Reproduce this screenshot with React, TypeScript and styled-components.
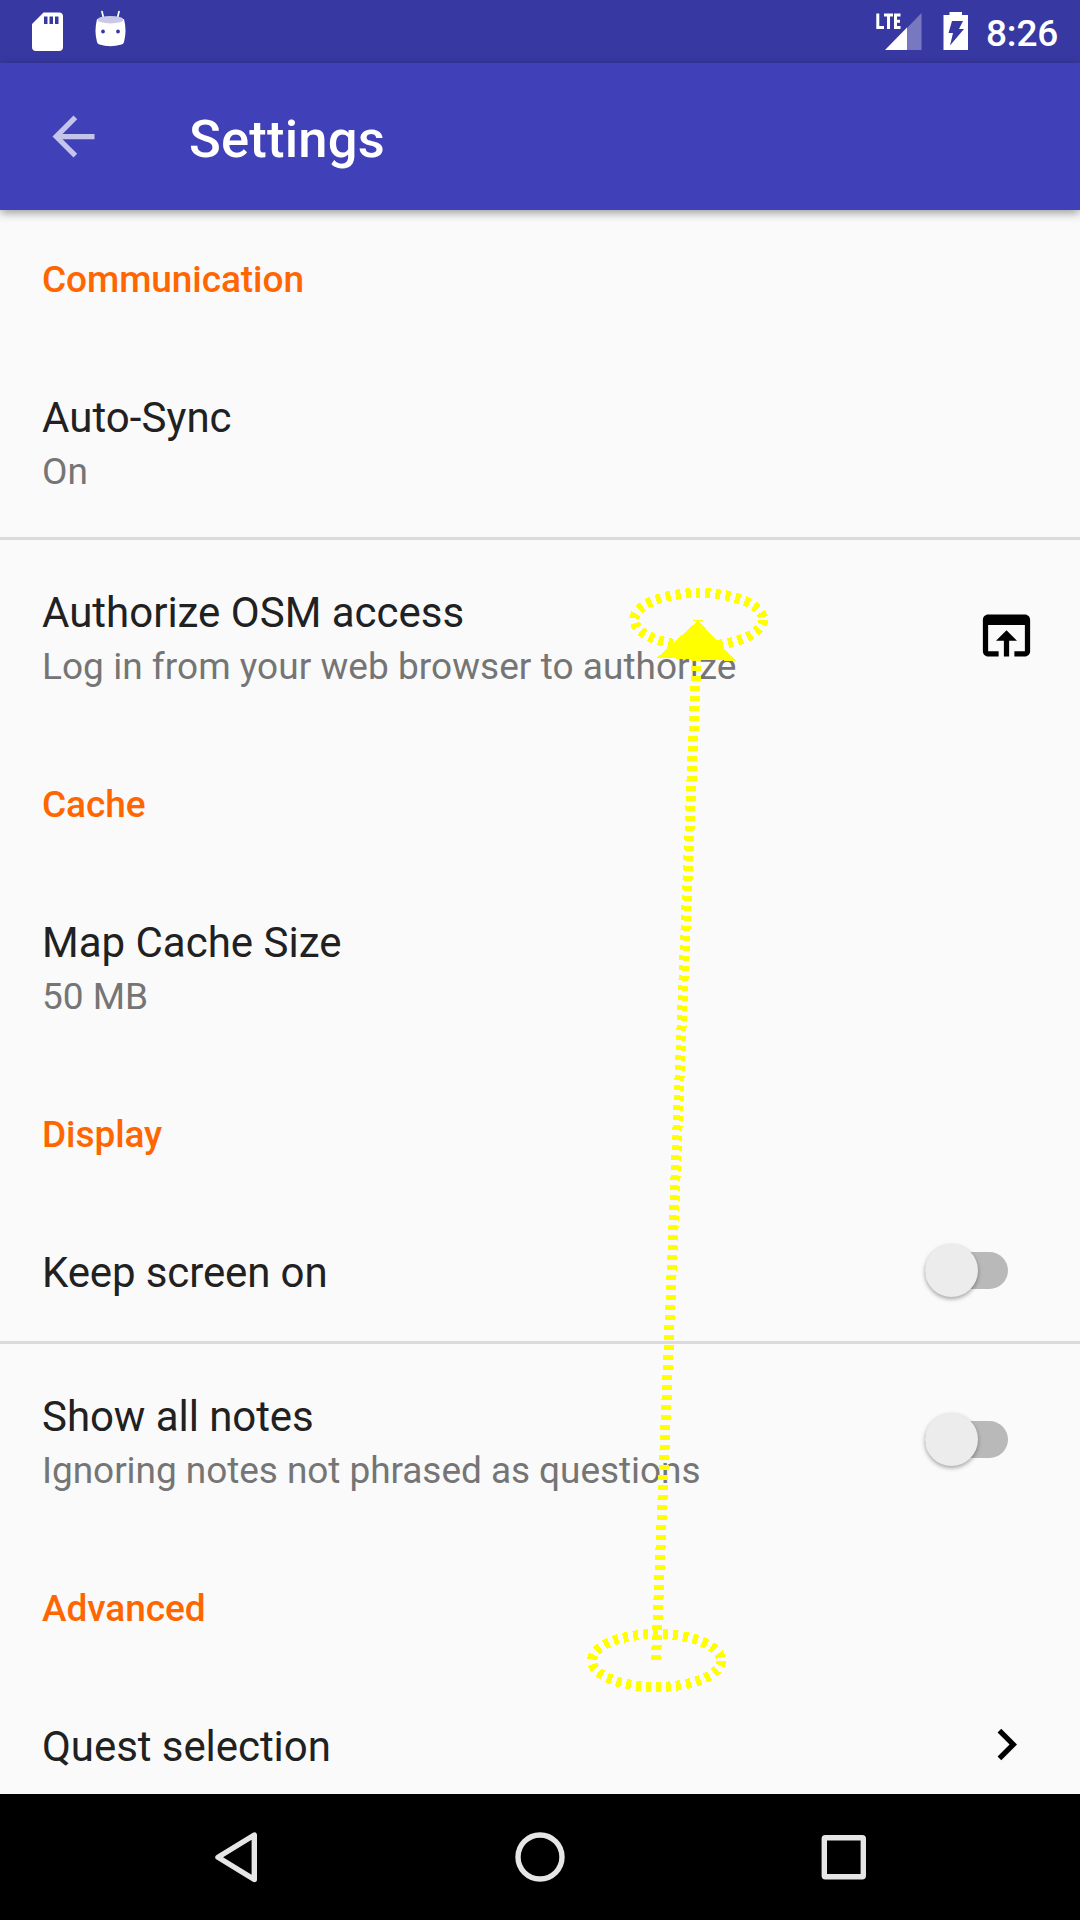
import React from "react";
import styled, { createGlobalStyle } from "styled-components";

const Global = createGlobalStyle`
  * { box-sizing: border-box; }
  body { margin: 0; background: #fafafa; font-family: Roboto, "Noto Sans", sans-serif; }
`;

const Screen = styled.div`
  position: relative;
  width: 1080px;
  height: 1920px;
  display: flex;
  flex-direction: column;
  overflow: hidden;
  background: #fafafa;
`;

const StatusBar = styled.header`
  flex: none;
  height: 63px;
  display: flex;
  justify-content: space-between;
  background: #3838a2;
`;

const Clock = styled.time`
  width: 94px;
  font-size: 37px;
  font-weight: 500;
  line-height: 67px;
  letter-spacing: -0.2px;
  color: #fff;
`;

const StatusGroup = styled.div`
  display: flex;
`;

const Toolbar = styled.div`
  flex: none;
  height: 147px;
  display: flex;
  align-items: center;
  background: #4040b8;
  box-shadow: 0 3px 9px rgba(0, 0, 0, 0.38);
  z-index: 1;
`;

const BackButton = styled.button`
  width: 147px;
  height: 147px;
  padding: 0;
  border: 0;
  background: none;
  display: grid;
  place-items: center;
`;

const Title = styled.h1`
  margin: 0 0 0 42px;
  padding-top: 5px;
  font-size: 52.5px;
  font-weight: 500;
  line-height: 62px;
  letter-spacing: 0.2px;
  color: #fff;
`;

const List = styled.main`
  flex: 1;
  min-height: 0;
  overflow: hidden;
`;

const Category = styled.h2`
  margin: 0;
  height: 136px;
  padding: 45px 42px 0;
  font-size: 37px;
  font-weight: 500;
  line-height: 50px;
  letter-spacing: -0.07px;
  color: #ff6600;
`;

const Row = styled.div<{ $height: number; $after?: number }>`
  height: ${(p) => p.$height}px;
  margin-bottom: ${(p) => p.$after ?? 0}px;
  padding: 0 42px;
  display: flex;
  align-items: center;
  justify-content: space-between;
`;

const Divider = styled.hr`
  height: 3px;
  margin: 0 0 1px;
  border: 0;
  background: #dbdbdb;
`;

const Labels = styled.div`
  align-self: flex-start;
  padding-top: 44px;
`;

const Label = styled.div<{ $tracking?: number }>`
  font-size: 42px;
  line-height: 55px;
  letter-spacing: ${(p) => p.$tracking ?? 0}px;
  color: #212121;
`;

const Summary = styled.div<{ $tracking?: number }>`
  margin-top: 2px;
  font-size: 37px;
  line-height: 50px;
  letter-spacing: ${(p) => p.$tracking ?? 0}px;
  color: #757575;
`;

const Widget = styled.div`
  width: 63px;
  height: 63px;
  display: grid;
  place-items: center;
`;

const Track = styled.div`
  width: 83px;
  height: 37px;
  margin-right: 30px;
  display: flex;
  align-items: center;
  border-radius: 19px;
  background: #b9b9b9;
`;

const Thumb = styled.div`
  width: 53px;
  height: 53px;
  flex: none;
  border-radius: 50%;
  background: #ececec;
  box-shadow: 0 2px 4px rgba(0, 0, 0, 0.35);
`;

const NavBar = styled.nav`
  flex: none;
  height: 126px;
  padding: 0 92px;
  display: flex;
  justify-content: space-between;
  background: #000;
`;

const NavIcon = styled.svg`
  width: 290px;
  height: 126px;
  fill: none;
  stroke: #e6e6e6;
  stroke-width: 5.4;
  stroke-linejoin: round;
`;

const Gesture = styled.svg`
  position: absolute;
  inset: 0;
  z-index: 2;
  fill: none;
  stroke: #ffff00;
  stroke-width: 10;
  pointer-events: none;
  shape-rendering: crispEdges;
`;

const Switch = () => (
  <Track>
    <Thumb />
  </Track>
);

export default function App() {
  return (
    <>
      <Global />
      <Screen>
        <StatusBar>
          <svg width="140" height="63">
            <path
              fill="#fff"
              fillRule="evenodd"
              d="M43.5 12.5H59a4 4 0 0 1 4 4V47a4 4 0 0 1-4 4H36a4 4 0 0 1-4-4V24zM44 16.500V24h3.500V16.500zM49.500 16.500V24h3.500V16.500zM55 16.500V24h3.500V16.500z"
            />
            <path stroke="#fff" strokeWidth="1.700" strokeLinecap="round" d="M102 11.500l1.500 6.500M119 11.500l-1.500 6.500" />
            <path
              fill="#fff"
              fillRule="evenodd"
              d="M97 19Q94 31 97 42q.5 2 2.500 2.600Q110 48 121.500 44.600 123.500 44 124 42 127 31 124 19zM103 29.600a1.900 1.900 0 1 0 .01 3.800 1.900 1.900 0 0 0 0-3.800zM118 29.600a1.900 1.900 0 1 0 .01 3.800 1.900 1.900 0 0 0 0-3.800z"
            />
            <ellipse cx="110.500" cy="19.700" rx="13" ry="3.700" fill="#c9c9e6" />
          </svg>
          <StatusGroup>
            <svg width="113" height="63">
              <path fill="none" stroke="#fff" strokeWidth="3" d="M4.800 13.500V27.500H11M11 15H20M15.500 15V29M27.500 15H22.500V27.500H27.500M22.500 21.200H27" />
              <path fill="#7878c0" d="M48.500 13V50H34V28z" />
              <path fill="#fff" d="M34 27.500V50H12z" />
              <path fill="#fff" fillRule="evenodd" d="M76.500 12H89v3H95V50H70.500V15h6zM79 21H90L86 29H91L77 45.500 80 33H75.500z" />
            </svg>
            <Clock>8:26</Clock>
          </StatusGroup>
        </StatusBar>
        <Toolbar>
          <BackButton aria-label="Back">
            <svg width="63" height="63" viewBox="0 0 24 24" fill="#c5c5e9">
              <path d="M20 11H7.830l5.590-5.590L12 4l-8 8 8 8 1.410-1.410L7.830 13H20v-2z" />
            </svg>
          </BackButton>
          <Title>Settings</Title>
        </Toolbar>
        <List>
          <Category>Communication</Category>
          <Row $height={191}>
            <Labels>
              <Label $tracking={0.05}>Auto-Sync</Label>
              <Summary>On</Summary>
            </Labels>
          </Row>
          <Divider />
          <Row $height={189} $after={5}>
            <Labels>
              <Label>Authorize OSM access</Label>
              <Summary $tracking={0.04}>Log in from your web browser to authorize</Summary>
            </Labels>
            <Widget>
              <svg width="63" height="63" viewBox="0 0 24 24">
                <path d="M19 4H5c-1.110 0-2 .9-2 2v12c0 1.100.89 2 2 2h4v-2H5V8h14v10h-4v2h4c1.100 0 2-.9 2-2V6c0-1.100-.89-2-2-2zm-7 6l-4 4h3v6h2v-6h3l-4-4z" />
              </svg>
            </Widget>
          </Row>
          <Category>Cache</Category>
          <Row $height={191} $after={3}>
            <Labels>
              <Label>Map Cache Size</Label>
              <Summary>50 MB</Summary>
            </Labels>
          </Row>
          <Category>Display</Category>
          <Row $height={139} $after={1}>
            <Labels>
              <Label $tracking={-0.12}>Keep screen on</Label>
            </Labels>
            <Switch />
          </Row>
          <Divider />
          <Row $height={189} $after={5}>
            <Labels>
              <Label $tracking={-0.06}>Show all notes</Label>
              <Summary $tracking={-0.06}>Ignoring notes not phrased as questions</Summary>
            </Labels>
            <Switch />
          </Row>
          <Category>Advanced</Category>
          <Row $height={139}>
            <Labels>
              <Label $tracking={-0.06}>Quest selection</Label>
            </Labels>
            <Widget>
              <svg width="63" height="63" viewBox="0 0 24 24">
                <path d="M8.590 16.590L13.170 12 8.590 7.410 10 6l6 6-6 6z" />
              </svg>
            </Widget>
          </Row>
        </List>
        <NavBar>
          <NavIcon>
            <path d="M162.300 41V85.500L126 63.200z" />
          </NavIcon>
          <NavIcon>
            <circle cx="145" cy="63" r="22" />
          </NavIcon>
          <NavIcon>
            <rect x="126.300" y="43.700" width="39" height="39" rx="1" />
          </NavIcon>
        </NavBar>
        <Gesture width="1080" height="1920">
          <ellipse cx="698.700" cy="619.500" rx="64.400" ry="26.500" strokeDasharray="5 5" />
          <ellipse cx="656.500" cy="1660.500" rx="64.500" ry="26.500" strokeDasharray="5 5" />
          <path d="M656 1660L698 620" strokeDasharray="5 5" />
          <path stroke="none" fill="#ffff00" d="M698 620.500L657 657.700 736 661z" />
        </Gesture>
      </Screen>
    </>
  );
}
